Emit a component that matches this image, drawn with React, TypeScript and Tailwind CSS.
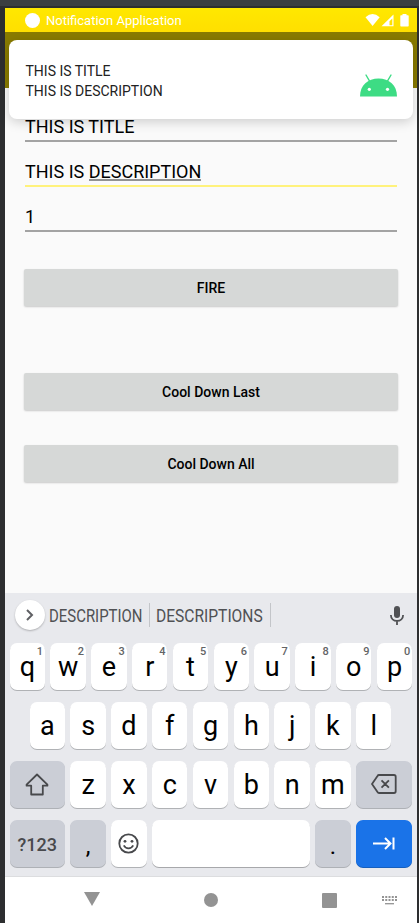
import React from "react";

const topRow = ["q", "w", "e", "r", "t", "y", "u", "i", "o", "p"];
const middleRow = ["a", "s", "d", "f", "g", "h", "j", "k", "l"];
const bottomRow = ["z", "x", "c", "v", "b", "n", "m"];

function Key({ label, hint }: { label: string; hint?: string }) {
  return (
    <div className="relative flex h-[47px] w-[35.5px] shrink-0 justify-center rounded-[7px] bg-white text-[27px] leading-[48px] text-black shadow-[0_1px_0_#b0b2b5]">
      {label}
      {hint && (
        <span className="absolute top-[2px] right-[2px] text-[11px] leading-[13px] font-medium text-[#636466]">{hint}</span>
      )}
    </div>
  );
}

function GreyKey({ className, children }: { className: string; children: React.ReactNode }) {
  return (
    <div className={`flex h-[47.5px] shrink-0 items-center justify-center rounded-[7px] bg-[#cbced6] shadow-[0_1px_0_#aeb1b6] ${className}`}>
      {children}
    </div>
  );
}

function Field({ children, line }: { children: React.ReactNode; line: string }) {
  return (
    <div className="flex h-[45px] flex-col justify-end">
      <div className="h-[24px] text-[18px] leading-[22px] whitespace-pre text-black">{children}</div>
      <div className={`h-[2px] ${line}`} />
    </div>
  );
}

function ActionButton({ children }: { children: React.ReactNode }) {
  return (
    <button className="-mx-[1px] block h-[37px] w-[374px] rounded-[2px] bg-[#d6d8d7] text-[14px] leading-[39px] font-medium text-black shadow-[0_1px_2px_rgba(0,0,0,0.2)]">
      {children}
    </button>
  );
}

function StatusBar() {
  return (
    <div className="flex h-6 items-center bg-linear-to-b from-[#ffe800] to-[#ffdf00] pl-5 text-white">
      <div className="h-[15px] w-[15px] rounded-full bg-white" />
      <span className="mt-[1px] ml-[6px] text-[13px] leading-4">Notification Application</span>
      <svg className="ml-auto mr-[8px]" width="44" height="14" viewBox="0 0 44 14" fill="white">
        <path d="M.5 4.2Q7.5-2.2 14.7 4.2L7.6 13Z" />
        <path fillRule="evenodd" d="M16.5 13.2 28.5 1.4v11.8Zm8-5v4h2.8V5.4Z" />
        <path d="M37.500 1h4v1.300H43q.7 0 .7.7v9.700q0 .7-.7.7h-7q-.7 0-.7-.7V3q0-.7.7-.7h1.500Z" />
      </svg>
    </div>
  );
}

function Notification() {
  return (
    <div className="absolute top-[32px] left-[4px] flex h-[79px] w-[404px] items-center justify-between rounded-[8px] bg-white pr-[16px] pl-[16.5px] shadow-[0_3px_12px_rgba(0,0,0,0.18)]">
      <div className="mt-[2px] text-[14px] leading-[20px] text-[#222]">
        <p>THIS IS TITLE</p>
        <p>THIS IS DESCRIPTION</p>
      </div>
      <svg className="mt-[12px]" width="37" height="23" viewBox="0 0 37 23">
        <path d="m6 1 4 6.8M31 1l-4 6.8" fill="none" stroke="#3ddc84" strokeWidth="1.4" strokeLinecap="round" />
        <path d="M0 22.5C0 11 8 4.5 18.5 4.5S37 11 37 22.5Z" fill="#3ddc84" />
        <circle cx="9.3" cy="15.3" r="1.6" fill="white" />
        <circle cx="27.5" cy="15.3" r="1.6" fill="white" />
      </svg>
    </div>
  );
}

function Suggestions() {
  return (
    <div className="flex h-[50px] items-center pt-[1px] text-[18px] text-[#505154]">
      <div className="-mt-[7px] ml-[10px] flex h-[30px] w-[30px] shrink-0 items-center justify-center rounded-full bg-white shadow-[0_1px_2px_rgba(0,0,0,0.25)]">
        <svg width="8" height="12" viewBox="0 0 8 12" fill="none" stroke="#5f6064" strokeWidth="2">
          <path d="m1 1 5 5-5 5" />
        </svg>
      </div>
      <div className="-mt-[6px] ml-[4px] w-[99px] shrink-0">
        <span className="inline-block origin-left scale-x-[.83]">DESCRIPTION</span>
      </div>
      <div className="-mt-[8px] ml-[1px] h-6 w-px bg-[#c3c5c9]" />
      <div className="-mt-[6px] ml-[6px] w-[114px] shrink-0">
        <span className="inline-block origin-left scale-x-[.865]">DESCRIPTIONS</span>
      </div>
      <div className="-mt-[8px] h-6 w-px bg-[#c3c5c9]" />
      <svg className="-mt-[7px] ml-auto mr-[13px]" width="14" height="19" viewBox="0 0 14 19" fill="none">
        <rect x="4" y="0" width="6" height="12" rx="3" fill="#505154" />
        <path d="M.9 9c0 3.6 2.7 5.9 6.1 5.9s6.1-2.3 6.1-5.9M7 15v4" stroke="#505154" strokeWidth="1.8" />
      </svg>
    </div>
  );
}

function Keyboard() {
  return (
    <div className="flex h-[284px] flex-col border-b border-[#dcdddf] bg-[#e8e9ed]">
      <Suggestions />
      <div className="flex flex-col gap-[11.8px] pl-[4.6px]">
        <div className="flex gap-[5.3px]">
          {topRow.map((k, i) => <Key key={k} label={k} hint={String((i + 1) % 10)} />)}
        </div>
        <div className="flex gap-[5.3px] pl-[20px]">
          {middleRow.map((k) => <Key key={k} label={k} />)}
        </div>
        <div className="flex gap-[5.3px]">
          <GreyKey className="w-[55.5px]">
            <svg width="24" height="23" viewBox="0 0 24 23" fill="none" stroke="#48494c" strokeWidth="1.8" strokeLinejoin="round">
              <path d="M12 1.5 1.6 11.7v1h4.6v8.8h11.6v-8.8h4.6v-1Z" />
            </svg>
          </GreyKey>
          {bottomRow.map((k) => <Key key={k} label={k} />)}
          <GreyKey className="w-[56px]">
            <svg width="26" height="20" viewBox="0 0 26 20" fill="none" stroke="#48494c" strokeWidth="1.8" strokeLinejoin="round">
              <path d="M8 1h15q1.7 0 1.7 1.7v14.6Q24.7 19 23 19H8Q7 19 6.5 18L1 10l5.5-8Q7 1 8 1ZM10.5 6.3l7.4 7.4m0-7.4-7.4 7.4" />
            </svg>
          </GreyKey>
        </div>
        <div className="flex gap-[5.3px]">
          <GreyKey className="w-[55.5px]"><span className="mt-[1px] text-[18px] font-medium text-[#48494c]">?123</span></GreyKey>
          <GreyKey className="w-[35.5px]"><span className="mt-[5px] text-[24px] leading-6">,</span></GreyKey>
          <div className="flex h-[47.5px] w-[35.5px] shrink-0 items-center justify-center rounded-[7px] bg-white shadow-[0_1px_0_#b0b2b5]">
            <svg width="21" height="21" viewBox="0 0 21 21" fill="none">
              <circle cx="10.5" cy="10.5" r="9.2" stroke="#48494c" strokeWidth="1.8" />
              <circle cx="7" cy="8.3" r="1.4" fill="#48494c" />
              <circle cx="14" cy="8.3" r="1.4" fill="#48494c" />
              <path d="M5.8 12.3q1.6 3 4.7 3t4.7-3" stroke="#48494c" strokeWidth="1.8" />
            </svg>
          </div>
          <div className="h-[47.5px] w-[158px] shrink-0 rounded-[7px] bg-white shadow-[0_1px_0_#a7a8ab]" />
          <GreyKey className="w-[35.5px]"><span className="mt-[5px] text-[24px] leading-6">.</span></GreyKey>
          <div className="flex h-[47.5px] w-[56px] shrink-0 items-center justify-center rounded-[7px] bg-[#1a73e8] shadow-[0_1px_0_#165fbe]">
            <svg width="22" height="13" viewBox="0 0 22 13" fill="none" stroke="white" strokeWidth="2">
              <path d="M0 6.5h17M12 1l5.5 5.5L12 12M20.5.5v12" />
            </svg>
          </div>
        </div>
      </div>
    </div>
  );
}

function NavigationBar() {
  return (
    <div className="flex h-[46px] items-center bg-white pl-[79px] text-[#939393]">
      <svg width="16" height="14" viewBox="0 0 16 14" className="-mt-[2px]" fill="currentColor">
        <path d="M0 0h16L8 14Z" />
      </svg>
      <div className="ml-[103.5px] h-[14.5px] w-[14.5px] rounded-full bg-[#939393]" />
      <div className="ml-[104px] h-[15px] w-[15px] rounded-[1px] bg-[#939393]" />
      <svg className="ml-[45px]" width="15" height="9" viewBox="0 0 15 9" fill="none" stroke="currentColor">
        <path d="M0 1h15M0 4h15" strokeWidth="1.8" strokeDasharray="2 1.25" />
        <path d="M3 7.7h9" strokeWidth="1.3" />
      </svg>
    </div>
  );
}

export default function App() {
  return (
    <div className="h-[923px] w-[419px] overflow-hidden border-t-[6px] border-[#3c3f41] bg-[#2d2e30] pt-[2px] pl-[5px] font-['Roboto',sans-serif]">
      <div className="relative flex h-[915px] w-[412px] flex-col bg-[#fafafa]">
        <StatusBar />
        <div className="h-[56px] bg-[#897b00]" />
        <div className="flex h-[505px] flex-col px-[20px] pt-[9px]">
          <Field line="bg-[#a3a3a3]">THIS IS TITLE</Field>
          <Field line="bg-[#fff27c]">
            THIS IS <span className="inline-block h-[20px] border-b-2 border-[#929292]">DESCRIPTION</span>
          </Field>
          <Field line="bg-[#a3a3a3]">1</Field>
          <div className="mt-[37px]"><ActionButton>FIRE</ActionButton></div>
          <div className="mt-[67px]"><ActionButton>Cool Down Last</ActionButton></div>
          <div className="mt-[35px]"><ActionButton>Cool Down All</ActionButton></div>
        </div>
        <Keyboard />
        <NavigationBar />
        <Notification />
      </div>
    </div>
  );
}
